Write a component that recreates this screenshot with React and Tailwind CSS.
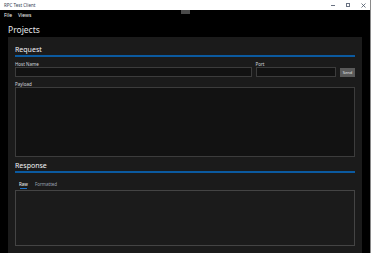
import React from 'react';

const font = { fontFamily: '"Noto Sans", "Open Sans", sans-serif' };

function Header({ title }) {
    return (
        <div className="flex flex-col">
            <div className="h-[8px] text-[7px] leading-[8px] text-gray-100">{title}</div>
            <div className="mt-[1px] h-[2px] bg-[#0b5aa0]" />
        </div>
    );
}

function Label({ children }) {
    return <div className="h-[6px] text-[4.5px] leading-[6px] text-gray-300">{children}</div>;
}

export default function App() {
    return (
        <div className="relative w-[371px] h-[253px] bg-black flex flex-col overflow-hidden border-r border-[#8a8a8a]" style={font}>
            <div className="h-[10px] bg-white flex items-center pl-[4px]">
                <span className="text-[4.5px] text-gray-700">RPC Test Client</span>
                <div className="ml-auto flex items-center gap-[11px] pr-[4px]">
                    <div className="w-[4px] h-[1px] bg-gray-500" />
                    <div className="w-[4px] h-[4px] border border-gray-500" />
                    <svg width="5" height="5" viewBox="0 0 5 5" className="text-gray-600">
                        <path d="M0.5 0.5 L4.5 4.5 M4.5 0.5 L0.5 4.5" stroke="currentColor" strokeWidth="0.8" />
                    </svg>
                </div>
            </div>
            <div className="absolute left-[181px] top-[10px] w-[9px] h-[4px] bg-[#4a4a4a]" />
            <div className="h-[12px] flex items-center gap-[6px] pl-[4px] text-[5px] text-gray-100">
                <span>File</span>
                <span>Views</span>
            </div>
            <div className="h-[15px] pl-[8px] text-[8.5px] leading-[15px] text-gray-200">Projects</div>
            <div className="ml-[8px] w-[354px] flex-1 bg-[#1b1b1b] px-[7px] pt-[9px] flex flex-col">
                <Header title="Request" />
                <div className="mt-[4px] flex gap-[4px]">
                    <div className="w-[238px] flex flex-col">
                        <Label>Host Name</Label>
                        <div className="h-[10px] bg-[#121212] border border-[#3c3c3c]" />
                    </div>
                    <div className="w-[81px] flex flex-col">
                        <Label>Port</Label>
                        <div className="h-[10px] bg-[#121212] border border-[#3c3c3c]" />
                    </div>
                    <div className="flex flex-col justify-end">
                        <div className="w-[15px] h-[9px] bg-[#5a5a5a] flex items-center justify-center text-[4px] text-gray-200">Send</div>
                    </div>
                </div>
                <div className="mt-[4px]">
                    <Label>Payload</Label>
                    <div className="h-[70px] bg-[#121212] border border-[#3c3c3c]" />
                </div>
                <div className="mt-[5px]">
                    <Header title="Response" />
                </div>
                <div className="mt-[8px] flex gap-[7px] pl-[4px] text-[4.5px] leading-[6px]">
                    <div className="flex flex-col items-center">
                        <span className="text-gray-100">Raw</span>
                        <div className="mt-[1px] w-[7px] h-[1px] bg-[#1e72c8]" />
                    </div>
                    <span className="text-gray-400">Formatted</span>
                </div>
                <div className="mt-[1px] h-[56px] bg-[#1b1b1b] border border-[#444]" />
            </div>
        </div>
    );
}
